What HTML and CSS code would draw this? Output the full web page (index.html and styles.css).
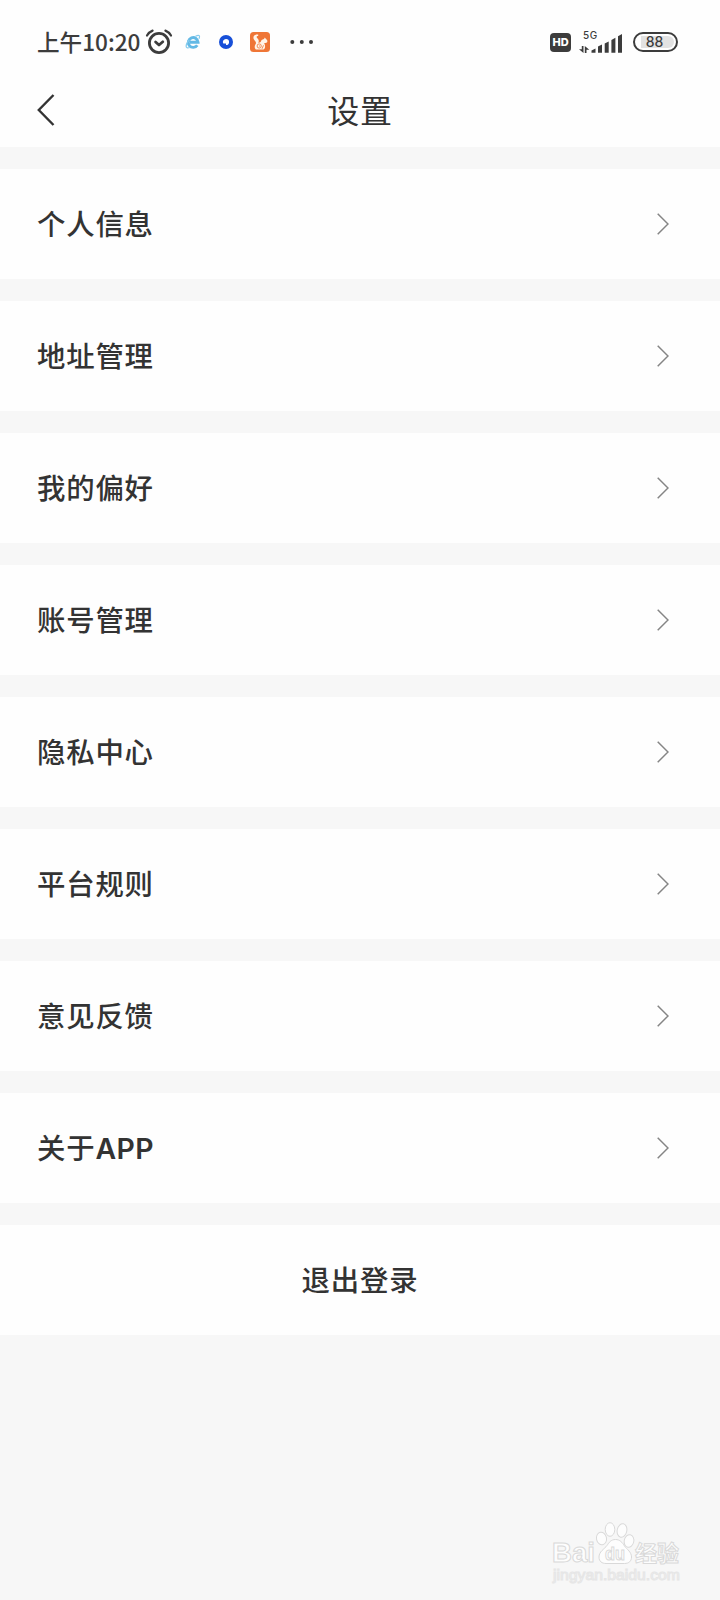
FILE: index.html
```html
<!DOCTYPE html>
<html lang="zh">
<head>
  <meta charset="UTF-8">
  <title>设置</title>
  <link rel="stylesheet" href="styles.css">
</head>
<body>
  <div class="status-bar">
    <span class="time">上午10:20</span>
    <svg class="alarm" width="28" height="26" viewBox="0 0 28 26" fill="none" stroke="#3c3c3c" stroke-width="2.8" stroke-linecap="round" stroke-linejoin="round">
      <circle cx="14" cy="14" r="9.6"/>
      <path d="M10.6 13l3.4 3 3.8-3.2"/>
      <path d="M2 6.5Q4 3 7.6 1.6M26 6.500Q24 3 20.4 1.6" stroke-width="2.2"/>
    </svg>
    <svg class="ie" width="16" height="16" viewBox="0 0 16 16" fill="none">
      <path d="M12.3 11.2A4.9 4.9 0 1 1 13.1 8.3H5" stroke="#63b9e5" stroke-width="2.9"/>
      <path d="M10.5 2.2C14.6.2 15.2 2 14 4.8M4.2 5.8C.2 10.5-.2 15.4 4.8 13.5" stroke="#86cbed" stroke-width="1.2"/>
    </svg>
    <svg class="quark" width="14" height="14" viewBox="0 0 14 14">
      <circle cx="7" cy="7" r="7" fill="#174fd8"/>
      <path d="M7 3.9a3.1 3.1 0 1 1 0 6.200V8.600H4.300A3.100 3.100 0 0 1 7 3.900z" fill="#fff"/>
    </svg>
    <svg class="uc" width="20" height="20" viewBox="0 0 20 20">
      <rect width="20" height="20" rx="3.5" fill="#ef7636"/>
      <path d="M8.200 2.500C4.500 1.800 2.300 4.800 4 7.600c1.100 1.800 2.800 2.600 1.500 4.700-1 1.600-1.300 3.600.3 5.200h7.700c1.600-1.200 1.900-2.900 1.300-4.900l-.9-1.100 3-.9c1-1.300.3-2.900-.9-3.500l-1.200-1.500-.8 1.400c-2 .3-3 1.500-3.300 3.100L8.300 11c1-2.500.2-3.700-1-4.700-1.200-1-.8-2.200.9-2.200z" fill="#fff5e9"/>
      <circle cx="9.200" cy="14" r="2.100" fill="none" stroke="#ef7636" stroke-width=".8"/>
      <path d="M9 14h1M12 16.800l1.500-3.500" stroke="#ef7636" stroke-width=".8"/>
    </svg>
    <svg class="more" width="24" height="4" viewBox="0 0 24 4" fill="#3c3c3c">
      <circle cx="2.3" cy="2" r="2"/><circle cx="11.8" cy="2" r="2"/><circle cx="21" cy="2" r="2"/>
    </svg>

    <span class="hd">HD</span>
    <div class="network">
      <span class="network-type">5G</span>
      <svg width="44" height="20" viewBox="0 0 44 20" fill="#3c3c3c">
        <path d="M2.8 13h1.7v7L0 16.2h2.8zM5.8 20v-7l4.5 3.8H7.500V20z"/>
        <path d="M12.500 19.800v-2.400l4-2v4.400zM19 13.500l4-2v8.300h-4zM25.7 10.500l4-2v11.300h-4zM32.400 7l4-2.200v15h-4zM39 3.200L43 1v18.800h-4z"/>
      </svg>
    </div>
    <div class="battery"><span>88</span></div>
  </div>

  <div class="header">
    <svg class="back" width="18" height="32" viewBox="0 0 18 32" fill="none" stroke="#333" stroke-width="2.400">
      <path d="M16.5 1L1.8 16l14.7 15"/>
    </svg>
    <h1>设置</h1>
  </div>

  <div class="list">
    <div class="item"><span>个人信息</span><svg class="arrow" viewBox="0 0 12 22"><path d="M.7.7L11 11 .7 21.3"/></svg></div>
    <div class="item"><span>地址管理</span><svg class="arrow" viewBox="0 0 12 22"><path d="M.7.7L11 11 .7 21.3"/></svg></div>
    <div class="item"><span>我的偏好</span><svg class="arrow" viewBox="0 0 12 22"><path d="M.7.7L11 11 .7 21.3"/></svg></div>
    <div class="item"><span>账号管理</span><svg class="arrow" viewBox="0 0 12 22"><path d="M.7.7L11 11 .7 21.3"/></svg></div>
    <div class="item"><span>隐私中心</span><svg class="arrow" viewBox="0 0 12 22"><path d="M.7.7L11 11 .7 21.3"/></svg></div>
    <div class="item"><span>平台规则</span><svg class="arrow" viewBox="0 0 12 22"><path d="M.7.7L11 11 .7 21.3"/></svg></div>
    <div class="item"><span>意见反馈</span><svg class="arrow" viewBox="0 0 12 22"><path d="M.7.7L11 11 .7 21.3"/></svg></div>
    <div class="item"><span>关于<span class="latin">APP</span></span><svg class="arrow" viewBox="0 0 12 22"><path d="M.7.7L11 11 .7 21.3"/></svg></div>
    <div class="item logout"><span>退出登录</span></div>
  </div>

  <div class="watermark">
    <svg width="140" height="64" viewBox="0 0 140 64">
      <g class="outline">
        <text class="logo" x="2" y="40" textLength="43" lengthAdjust="spacingAndGlyphs">Bai</text>
        <ellipse cx="51.5" cy="16.500" rx="5" ry="6.3" transform="rotate(-12 51.5 16.5)"/>
        <ellipse cx="60" cy="7.500" rx="4.8" ry="6.8"/>
        <ellipse cx="72" cy="8.500" rx="4.8" ry="6.8" transform="rotate(12 72 8.5)"/>
        <ellipse cx="79" cy="19" rx="4.8" ry="6.3" transform="rotate(12 79 19)"/>
        <path d="M65.500 17.500c-4.500 0-6.500 3-8.500 6-2.500 3.500-8 6-8 11.500 0 4.500 3 6.500 7 6.500h18.500c4.500 0 7-2.500 7-6.500 0-5-4.500-7.500-7-11-2.200-3.500-4.500-6.500-9-6.500z"/>
        <text class="du" x="55" y="38" textLength="20" lengthAdjust="spacingAndGlyphs">du</text>
        <text class="cn" x="85" y="39" textLength="44" lengthAdjust="spacingAndGlyphs">经验</text>
        <text class="url" x="3" y="58" textLength="127" lengthAdjust="spacingAndGlyphs">jingyan.baidu.com</text>
      </g>
    </svg>
  </div>
</body>
</html>
```
FILE: styles.css
```css
* {
  box-sizing: border-box;
}
body {
  margin: 0;
  min-height: 1600px;
  display: flex;
  flex-direction: column;
  background: #f7f7f7;
  color: #333;
  font-family: "Noto Sans CJK SC", sans-serif;
}
svg {
  display: block;
  flex-shrink: 0;
}
.status-bar {
  height: 84px;
  padding: 0 42px 0 37px;
  display: flex;
  align-items: center;
  background: #fefefe;
  color: #3c3c3c;
}
.time {
  width: 108px;
  font-size: 22.6px;
  font-weight: 500;
  line-height: 32px;
  white-space: nowrap;
}
.ie {
  margin-left: 12px;
}
.quark {
  margin-left: 18px;
}
.uc {
  margin-left: 17px;
}
.more {
  margin-left: 20px;
}
.hd {
  margin-left: auto;
  width: 21px;
  height: 19px;
  border-radius: 4px;
  background: #3c3c3c;
  color: #fff;
  font: 800 11px/18px Inter, sans-serif;
  text-align: center;
}
.network {
  width: 44px;
  height: 24px;
  margin-left: 8px;
  display: grid;
}
.network > * {
  grid-area: 1 / 1;
}
.network svg {
  align-self: end;
  margin-bottom: 1px;
}
.network-type {
  padding-left: 4px;
  font: 500 10px/10px Inter, sans-serif;
  letter-spacing: 0.5px;
}
.battery {
  width: 45px;
  height: 20px;
  margin-left: 10px;
  padding: 2px 2px 2px 6px;
  border: 2px solid #3c3c3c;
  border-radius: 10px;
}
.battery span {
  display: block;
  height: 12px;
  padding-right: 6px;
  border-radius: 0 6px 6px 0;
  background: #e2e2e2;
  font: 500 14px/12px Inter, sans-serif;
  text-align: center;
}
.header {
  height: 63px;
  padding: 0 37px 12px;
  display: grid;
  grid-template-columns: 18px 1fr 18px;
  align-items: center;
  background: #fefefe;
}
h1 {
  margin: 0;
  padding-bottom: 1px;
  font-size: 32px;
  font-weight: 400;
  line-height: 46px;
  letter-spacing: 0.8px;
  text-align: center;
}
.list {
  margin-top: 22px;
  display: flex;
  flex-direction: column;
  gap: 22px;
}
.item {
  height: 110px;
  padding: 0 51px 0 37px;
  display: flex;
  align-items: center;
  justify-content: space-between;
  background: #fefefe;
  font-size: 28.4px;
  font-weight: 500;
  letter-spacing: 0.8px;
}
.item > span {
  padding-bottom: 3px;
}
.arrow {
  width: 12px;
  height: 22px;
  fill: none;
  stroke: #858585;
  stroke-width: 1.5;
}
.latin {
  font-family: Inter, sans-serif;
  font-weight: 600;
  letter-spacing: 0.4px;
}
.logout {
  padding: 0;
  justify-content: center;
}
.watermark {
  margin-top: auto;
  padding: 0 30px 14px 0;
  display: flex;
  justify-content: flex-end;
}
.outline {
  fill: #fdfdfd;
  stroke: #d9d9d9;
  stroke-width: 1;
}
.logo {
  font: bold 27px "Liberation Sans", sans-serif;
}
.du {
  font: bold 19px "Liberation Sans", sans-serif;
}
.cn {
  font: bold 22px "Noto Sans CJK SC", sans-serif;
}
.url {
  font: 14px "Liberation Sans", sans-serif;
  stroke: #e6e6e6;
}
```
